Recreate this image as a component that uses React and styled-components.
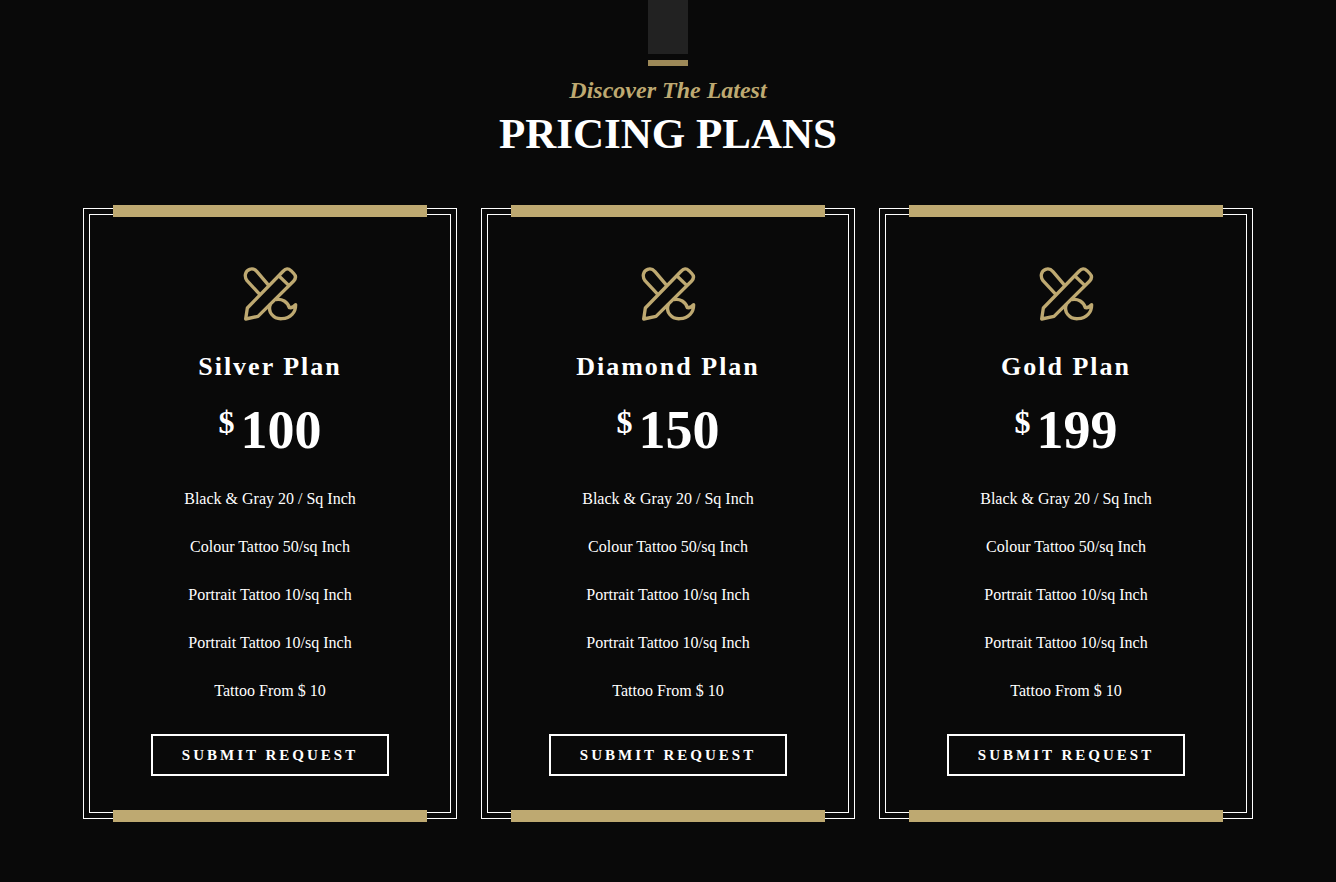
import React from 'react';
import styled, { createGlobalStyle } from 'styled-components';

const gold = '#bea971';

const GlobalStyle = createGlobalStyle`
  *, *::before, *::after { box-sizing: border-box; }
  body {
    margin: 0;
    background: #090909;
    color: #fff;
    font-family: "Liberation Serif", "Times New Roman", serif;
  }
`;

const Section = styled.section`
  display: flex;
  flex-direction: column;
  align-items: center;
  padding: 0 24px 60px;
`;

const Header = styled.header`
  display: flex;
  flex-direction: column;
  align-items: center;
  margin-bottom: 48px;
  text-align: center;
`;

const Ribbon = styled.div`
  width: 40px;
  height: 66px;
  border-bottom: 6px solid #9d8958;
  padding-bottom: 6px;
  background: #222 content-box;
  margin-bottom: 10px;
`;

const Kicker = styled.p`
  margin: 0 0 4px;
  color: ${gold};
  font-size: 24px;
  line-height: 28px;
  font-style: italic;
  font-weight: 700;
`;

const Title = styled.h2`
  margin: 0;
  font-size: 43px;
  line-height: 52px;
  font-weight: 700;
  text-transform: uppercase;
`;

const Plans = styled.div`
  display: grid;
  grid-template-columns: repeat(3, 1fr);
  gap: 24px;
  width: 100%;
  max-width: 1170px;

  @media (max-width: 900px) {
    grid-template-columns: 1fr;
  }
`;

const Card = styled.article`
  position: relative;
  padding: 5px;
  border: 1px solid #fff;

  &::before,
  &::after {
    content: '';
    position: absolute;
    left: 29px;
    right: 29px;
    height: 12px;
    background: ${gold};
  }
  &::before { top: -4px; }
  &::after { bottom: -4px; }
`;

const CardBody = styled.div`
  display: flex;
  flex-direction: column;
  align-items: center;
  padding: 51px 20px 36px;
  border: 1px solid #fff;
`;

const Icon = styled.svg`
  width: 56px;
  height: 56px;
  margin-bottom: 29px;
  fill: none;
  stroke: ${gold};
  stroke-width: 10;
  stroke-linejoin: round;
`;

const PlanName = styled.h3`
  margin: 0 0 17px;
  font-size: 26px;
  line-height: 32px;
  font-weight: 700;
  letter-spacing: 2px;
`;

const Price = styled.p`
  display: flex;
  gap: 6px;
  margin: 0 0 15px;
  font-size: 54px;
  line-height: 60px;
  font-weight: 700;
`;

const Currency = styled.span`
  font-size: 32px;
  line-height: 44px;
`;

const Features = styled.ul`
  margin: 0 0 19px;
  padding: 0;
  list-style: none;
  text-align: center;
  font-size: 16px;
  line-height: 48px;
`;

const SubmitButton = styled.button`
  width: 238px;
  max-width: 100%;
  height: 42px;
  padding: 0;
  border: 2px solid #fff;
  background: transparent;
  color: #fff;
  font-family: inherit;
  font-size: 15px;
  font-weight: 700;
  letter-spacing: 3px;
  text-transform: uppercase;
  cursor: pointer;
`;

const features = [
  'Black & Gray 20 / Sq Inch',
  'Colour Tattoo 50/sq Inch',
  'Portrait Tattoo 10/sq Inch',
  'Portrait Tattoo 10/sq Inch',
  'Tattoo From $ 10',
];

const plans = [
  { name: 'Silver Plan', price: 100 },
  { name: 'Diamond Plan', price: 150 },
  { name: 'Gold Plan', price: 199 },
];

function PencilBrushIcon() {
  return (
    <Icon viewBox="36 33 168 168" aria-hidden="true">
      <path d="M47 192 L52 159 L160 48 Q171 36 183 47 L191 55 Q202 66 191 78 L84 184 Z" />
      <path d="M147 63 L177 92" />
      <path d="M90 119 L51 77 C42 65 45 48 59 43 C67 40 75 43 81 50 L116 91" />
      <path d="M121 148 C112 170 130 193 156 191 C182 190 197 172 197 149 Q188 160 178 158 C173 141 156 130 137 134" />
    </Icon>
  );
}

function PlanCard({ name, price }) {
  return (
    <Card>
      <CardBody>
        <PencilBrushIcon />
        <PlanName>{name}</PlanName>
        <Price>
          <Currency>$</Currency>
          <span>{price}</span>
        </Price>
        <Features>
          {features.map((feature, i) => (
            <li key={i}>{feature}</li>
          ))}
        </Features>
        <SubmitButton type="button">Submit Request</SubmitButton>
      </CardBody>
    </Card>
  );
}

export default function App() {
  return (
    <>
      <GlobalStyle />
      <Section>
        <Header>
          <Ribbon />
          <Kicker>Discover The Latest</Kicker>
          <Title>Pricing Plans</Title>
        </Header>
        <Plans>
          {plans.map((plan) => (
            <PlanCard key={plan.name} {...plan} />
          ))}
        </Plans>
      </Section>
    </>
  );
}
